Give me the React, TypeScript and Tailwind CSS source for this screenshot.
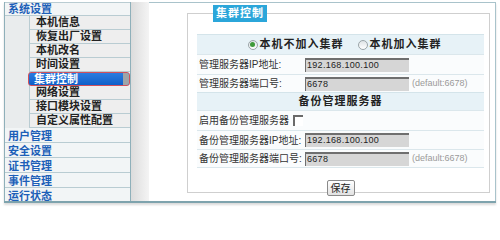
import React from "react";

const subItems = ["本机信息", "恢复出厂设置", "本机改名", "时间设置", "集群控制", "网络设置", "接口模块设置", "自定义属性配置"];
const topItems = ["用户管理", "安全设置", "证书管理", "事件管理", "运行状态"];

const Radio = ({ checked }: { checked?: boolean }) => (
  <span className="inline-flex items-center justify-center w-[10px] h-[10px] rounded-full border border-[#9aa4a8] bg-gradient-to-b from-[#dfe4e6] to-white mr-[2px]">
    {checked && <span className="w-[5px] h-[5px] rounded-full bg-[#3f9a3a]" />}
  </span>
);

const Field = ({ value }: { value: string }) => (
  <div className="w-[104px] h-[14px] bg-[#d6d6d6] border-t-2 border-l border-[#6f6f6f] text-[9px] leading-[11px] pl-[1px] text-[#222] tracking-[0.3px]">
    {value}
  </div>
);

export default function App() {
  return (
    <div className="w-[500px] h-[212px] bg-white overflow-hidden font-['Liberation_Sans','Noto_Sans_CJK_SC',sans-serif]">
      <div className="flex ml-[4px] mt-[2px] w-[492px] h-[201px] border-b-2 border-[#7ea3ad] shadow-[0_2px_2px_rgba(0,0,0,0.15)]">
        {/* sidebar */}
        <div className="w-[128px] h-full overflow-hidden border-l border-r border-[#8fb0ba] bg-[#f2f5f6]">
          <div className="h-[14px] border-t border-b border-[#b9ccd2] text-[11px] leading-[12px] font-bold text-[#1c5fb8] pl-[3px]">系统设置</div>
          <div className="flex">
            <div className="w-[25px] bg-[#e9eced] border-r border-[#b9ccd2]" />
            <div className="flex-1 flex flex-col">
              {subItems.map((t) =>
                t === "集群控制" ? (
                  <div key={t} className="h-[14px] -ml-[2px] rounded-[3px] border border-[#d0505c] bg-gradient-to-b from-[#2a7ce0] to-[#0f5fc8] flex text-white text-[11px] leading-[12px] font-bold">
                    <span className="flex-1 pl-[5px]">{t}</span>
                    <span className="w-[6px] bg-[#9ea4a8] rounded-r-[2px]" />
                  </div>
                ) : (
                  <div key={t} className="h-[14px] border-b border-[#b9ccd2] bg-[#eeeeee] text-[11px] leading-[13px] font-bold text-[#222] pl-[6px]">
                    {t}
                  </div>
                )
              )}
            </div>
          </div>
          {topItems.map((t) => (
            <div key={t} className="h-[15px] border-b border-[#b9ccd2] text-[11px] leading-[13px] pt-[2px] font-bold text-[#1c5fb8] pl-[3px]">
              {t}
            </div>
          ))}
        </div>
        {/* gap */}
        <div className="w-[18px] h-full bg-gradient-to-r from-[#dcdcdc] to-[#f4f4f4]" />
        {/* main */}
        <div className="flex-1 h-full border-t border-r border-[#a9c3cb] bg-white pl-[38px] pr-[5px]">
          <fieldset className="mt-[2px] h-[188px] border border-[#cfcfcf] pl-[9px] pr-[5px]">
            <legend className="ml-[16px] h-[17px] px-[3px] bg-[#2ba6da] text-white text-[11px] leading-[17px] font-bold tracking-[1px]">集群控制</legend>
            <div className="mt-[12px] w-[287px] text-[10px] text-[#333]">
              <div className="h-[20px] bg-[#e7f2f7] border-t border-[#d4e4ea] flex items-center justify-center text-[11px] font-bold text-[#222] tracking-[1px] pl-[8px]">
                <Radio checked />
                <span className="mr-[14px]">本机不加入集群</span>
                <Radio />
                <span>本机加入集群</span>
              </div>
              <div className="h-[20px] border-t border-[#dbe7ec] bg-[#fafcfd] flex items-center">
                <span className="w-[108px] pl-[2px]">管理服务器IP地址:</span>
                <Field value="192.168.100.100" />
              </div>
              <div className="h-[18px] border-t border-[#dbe7ec] bg-[#fafcfd] flex items-center">
                <span className="w-[108px] pl-[2px]">管理服务器端口号:</span>
                <Field value="6678" />
                <span className="ml-[3px] text-[9px] text-[#9a9a9a]">(default:6678)</span>
              </div>
              <div className="h-[18px] border-t border-[#d4e4ea] bg-[#e7f2f7] flex items-center justify-center text-[11px] font-bold text-[#222] tracking-[1px]">
                备份管理服务器
              </div>
              <div className="h-[20px] border-t border-[#dbe7ec] bg-[#fafcfd] flex items-center">
                <span className="pl-[2px]">启用备份管理服务器</span>
                <span className="ml-[4px] w-[10px] h-[11px] border-t-2 border-l-2 border-[#6a6a6a] bg-white" />
              </div>
              <div className="h-[19px] border-t border-[#dbe7ec] bg-[#fafcfd] flex items-center">
                <span className="w-[108px] pl-[2px]">备份管理服务器IP地址:</span>
                <Field value="192.168.100.100" />
              </div>
              <div className="h-[19px] border-t border-b border-[#dbe7ec] bg-[#fafcfd] flex items-center">
                <span className="w-[108px] pl-[2px]">备份管理服务器端口号:</span>
                <Field value="6678" />
                <span className="ml-[3px] text-[9px] text-[#9a9a9a]">(default:6678)</span>
              </div>
              <div className="flex justify-center pt-[12px]">
                <button className="h-[16px] px-[3px] border border-[#8a8a8a] rounded-[2px] bg-gradient-to-b from-white to-[#e2e2e2] text-[10px] leading-[13px] text-[#222]">保存</button>
              </div>
            </div>
          </fieldset>
        </div>
      </div>
    </div>
  );
}
